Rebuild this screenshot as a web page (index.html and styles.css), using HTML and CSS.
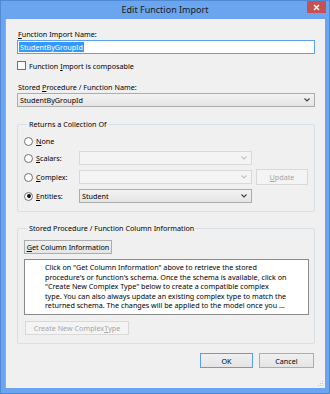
FILE: index.html
```html
<!DOCTYPE html>
<html>
<head>
<meta charset="utf-8">
<link rel="stylesheet" href="styles.css">
</head>
<body>
<div class="window">
  <div class="titlebar">
    <span></span>
    <span class="title">Edit Function Import</span>
    <span class="close"><svg width="7" height="7" viewBox="0 0 7 7"><path d="M1 1L6 6M6 1L1 6" stroke="#fff" stroke-width="1.4"/></svg></span>
  </div>
  <div class="client">
    <div class="label first"><u>F</u>unction Import Name:</div>
    <div class="textbox focused"><span class="sel">StudentByGroupId</span></div>
    <div class="check-row"><span class="checkbox"></span><span class="check-label">Function <u>I</u>mport is composable</span></div>
    <div class="label second">Stored <u>P</u>rocedure / Function Name:</div>
    <div class="combo"><span class="combo-text">StudentByGroupId</span><svg class="arrow" width="6" height="4" viewBox="0 0 6 4"><path d="M0.5 0.5L3 3L5.5 0.5" fill="none" stroke="#444" stroke-width="1.2"/></svg></div>

    <fieldset class="group g1">
      <legend>Returns a Collection Of</legend>
      <div class="opt-row r-none"><span class="radio"></span><span class="opt-label"><u>N</u>one</span></div>
      <div class="opt-row r-scalars"><span class="radio"></span><span class="opt-label"><u>S</u>calars:</span><div class="combo disabled opt-combo"><span class="combo-text"></span><svg class="arrow" width="6" height="4" viewBox="0 0 6 4"><path d="M0.5 0.5L3 3L5.5 0.5" fill="none" stroke="#c4c4c4" stroke-width="1.2"/></svg></div></div>
      <div class="opt-row r-complex"><span class="radio"></span><span class="opt-label"><u>C</u>omplex:</span><div class="combo disabled opt-combo"><span class="combo-text"></span><svg class="arrow" width="6" height="4" viewBox="0 0 6 4"><path d="M0.5 0.5L3 3L5.5 0.5" fill="none" stroke="#c4c4c4" stroke-width="1.2"/></svg></div><div class="btn disabled update"><u>U</u>pdate</div></div>
      <div class="opt-row r-entities"><span class="radio checked"></span><span class="opt-label"><u>E</u>ntities:</span><div class="combo opt-combo"><span class="combo-text">Student</span><svg class="arrow" width="6" height="4" viewBox="0 0 6 4"><path d="M0.5 0.5L3 3L5.5 0.5" fill="none" stroke="#444" stroke-width="1.2"/></svg></div></div>
    </fieldset>

    <fieldset class="group g2">
      <legend>Stored Procedure / Function Column Information</legend>
      <div class="btn get"><u>G</u>et Column Information</div>
      <div class="info">Click on "Get Column Information" above to retrieve the stored<br>procedure's or function's schema. Once the schema is available, click on<br>"Create New Complex Type" below to create a compatible complex<br>type. You can also always update an existing complex type to match the<br>returned schema. The changes will be applied to the model once you ...</div>
      <div class="btn disabled create">Create New Complex <u>T</u>ype</div>
    </fieldset>

    <div class="footer">
      <div class="btn ok">OK</div>
      <div class="btn cancel">Cancel</div>
    </div>
    <svg class="grip" width="6" height="6" viewBox="0 0 6 6"><g fill="#c8c8c8"><rect x="4" y="0" width="1" height="1"/><rect x="2" y="2" width="1" height="1"/><rect x="4" y="2" width="1" height="1"/><rect x="0" y="4" width="1" height="1"/><rect x="2" y="4" width="1" height="1"/><rect x="4" y="4" width="1" height="1"/></g></svg>
  </div>
</div>
</body>
</html>
```

FILE: styles.css
```css
* { box-sizing: border-box; }
html, body { margin: 0; padding: 0; background: #6ba5ef; }
body {
  font-family: "Noto Sans", "Open Sans", sans-serif;
  font-size: 7.2px;
  color: #000;
}
u { text-decoration-thickness: 1px; text-underline-offset: 1px; }
.window {
  width: 330px;
  height: 394px;
  border: 1px solid #4f88d4;
  background: #6ba5ef;
  display: flex;
  flex-direction: column;
}
.titlebar {
  height: 18px;
  display: grid;
  grid-template-columns: 1fr auto 1fr;
  align-items: start;
}
.title {
  font-size: 9px;
  line-height: 18px;
  color: #1a1a1a;
}
.close {
  justify-self: end;
  margin-right: 3px;
  width: 19px;
  height: 12px;
  background: #c75050;
  display: flex;
  align-items: center;
  justify-content: center;
}
.client {
  position: relative;
  flex: 1;
  margin: 0 4px 5px 4px;
  background: #f0f0f0;
  padding: 10px 10px 0 11px;
  border-left: 1px solid #7fb1f0;
}
.label { line-height: 10px; height: 10px; white-space: nowrap; padding-left: 1px; }
.label.second { margin-top: 12px; }
.textbox {
  margin-top: 1px;
  height: 14px;
  background: #fff;
  border: 1px solid #abadb3;
  padding: 1px 1px;
  line-height: 10px;
}
.textbox.focused { border-color: #5aa3ec; }
.sel { background: #3399ff; color: #fff; padding: 0 1px; display: inline-block; line-height: 10px; }
.check-row {
  margin-top: 7px;
  height: 9px;
  display: flex;
  align-items: center;
}
.checkbox {
  width: 9px; height: 9px;
  border: 1px solid #707070;
  background: #fff;
  flex: none;
}
.check-label { margin-left: 3px; line-height: 10px; }
.combo {
  margin-top: 1px;
  height: 14px;
  border: 1px solid #acacac;
  background: linear-gradient(#f2f2f2, #e5e5e5);
  display: flex;
  align-items: center;
  padding: 0 4px 0 2px;
}
.combo-text { flex: 1; line-height: 10px; }
.arrow { flex: none; }
.combo.disabled { border-color: #d9d9d9; background: #f4f4f4; }
.group {
  margin: 0;
  border: 1px solid #d5dfe5;
  border-radius: 2px;
  min-width: 0;
}
.group legend {
  line-height: 10px;
  padding: 0 2px;
  margin-left: 3px;
}
.g1 { margin-top: 12px; padding: 5px 6px 8px 6px; }
.opt-row { display: flex; align-items: center; height: 14px; }
.r-scalars { margin-top: 3px; }
.r-complex { margin-top: 4px; height: 16px; }
.r-entities { margin-top: 4px; }
.radio {
  width: 9px; height: 9px;
  border-radius: 50%;
  border: 1px solid #707070;
  background: #fff;
  flex: none;
  display: flex;
  align-items: center;
  justify-content: center;
}
.radio.checked::after {
  content: "";
  width: 4px; height: 4px;
  border-radius: 50%;
  background: #111;
}
.opt-label { width: 43px; flex: none; margin-left: 3px; line-height: 10px; }
.opt-combo { margin-top: 0; width: 173px; flex: none; }
.btn {
  height: 15px;
  border: 1px solid #acacac;
  background: linear-gradient(#f0f0f0, #e5e5e5);
  display: flex;
  align-items: center;
  justify-content: center;
  line-height: 10px;
  white-space: nowrap;
}
.btn.disabled { border-color: #d9d9d9; background: #f4f4f4; color: #a6a6a6; }
.update { width: 54px; margin-left: 4px; height: 16px; }
.g2 { margin-top: 11px; padding: 7px 5px 8px 6px; }
.get { width: 88px; height: 14px; }
.info {
  margin-top: 5px;
  height: 56px;
  background: #fff;
  border: 1px solid #8a8a8a;
  padding: 3px 0 0 20px;
  line-height: 9.6px;
  white-space: nowrap;
  overflow: hidden;
}
.create { margin-top: 6px; width: 104px; height: 14px; margin-left: 1px; }
.footer {
  margin-top: 9px;
  display: flex;
  justify-content: flex-end;
  gap: 6px;
  padding-right: 1px;
}
.ok { width: 53px; border-color: #5b9fe2; }
.cancel { width: 55px; }
.grip { position: absolute; right: 1px; bottom: 1px; }
```
